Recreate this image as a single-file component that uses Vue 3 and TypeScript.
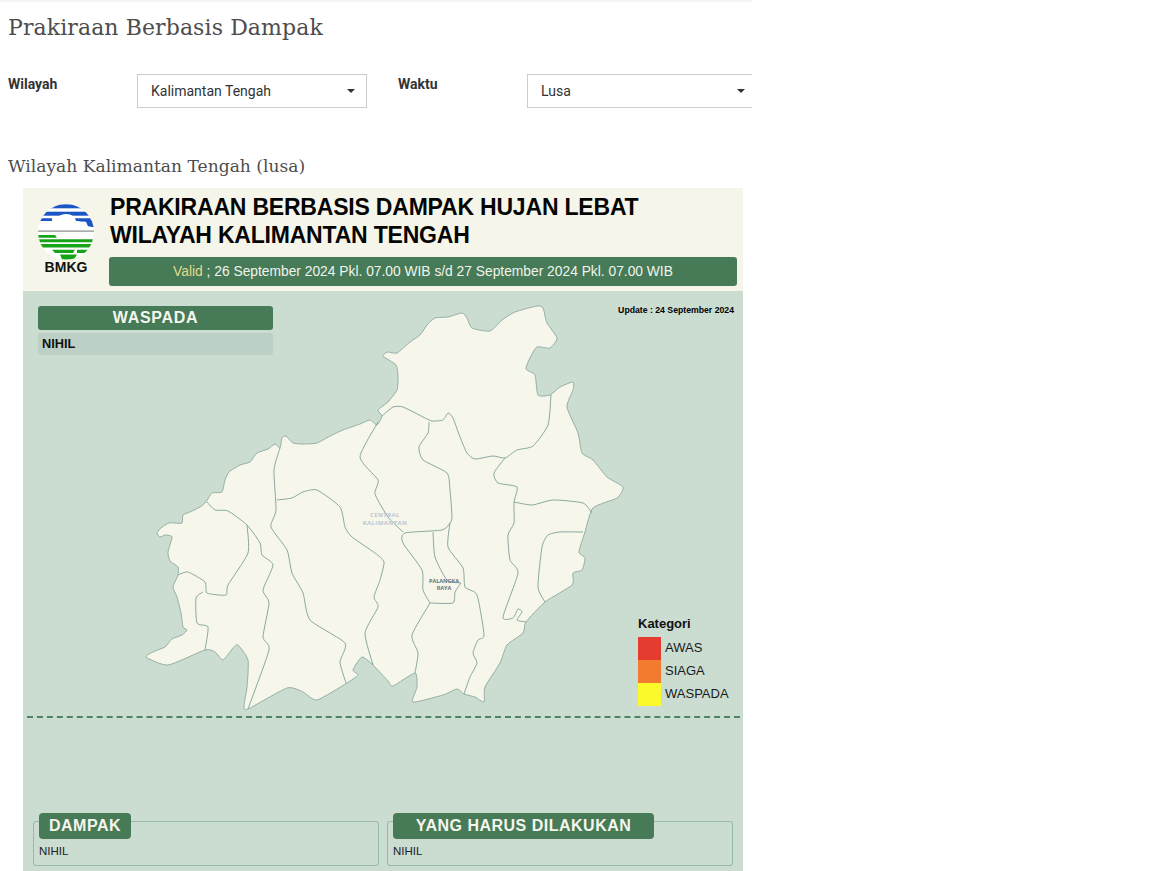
<template>
  <div class="page">
    <h1 class="title">Prakiraan Berbasis Dampak</h1>

    <div class="filters">
      <label class="filter-label">Wilayah</label>
      <div class="select"><span>Kalimantan Tengah</span><i class="caret"></i></div>
      <label class="filter-label">Waktu</label>
      <div class="select"><span>Lusa</span><i class="caret"></i></div>
    </div>

    <h2 class="subtitle">Wilayah Kalimantan Tengah (lusa)</h2>

    <div class="poster">
      <header class="poster-head">
        <div class="logo">
          <svg width="56" height="56" viewBox="0 0 56 56">
            <defs>
              <clipPath id="logo-clip"><circle cx="28" cy="28" r="28" /></clipPath>
            </defs>
            <g clip-path="url(#logo-clip)">
              <rect width="56" height="56" fill="#fff" />
              <rect y="0.300" width="56" height="4" fill="#1c56c4" />
              <rect y="7.700" width="56" height="4" fill="#1c56c4" />
              <path d="M0 14.300h14v2.700H0zM37 14.300h19v9l-6-1-2-4.500-11-.5z" fill="#1c56c4" />
              <path d="M10 27c0-3 1-7 6-8 1-5 6-9 12-9s9 3 10 7c4 0 7 2 8 4 3 0 4 3 3 6z" fill="#fff" />
              <rect y="26.500" width="56" height="1.200" fill="#85898a" />
              <path d="M0 31h17l2 2.700H0z" fill="#17a317" />
              <path d="M0 35.300h56v3H0z" fill="#17a317" />
              <path d="M0 40h56v3.500H0z" fill="#17a317" />
              <path d="M14 45.700h23l-2 3.300H17zM39 45.700h12l-3 3.300h-9z" fill="#17a317" />
              <path d="M22 50.500h17l-3 5H24z" fill="#17a317" />
            </g>
          </svg>
          <span class="logo-name">BMKG</span>
        </div>
        <div class="head-main">
          <div class="head-title">
            <div>PRAKIRAAN BERBASIS DAMPAK HUJAN LEBAT</div>
            <div>WILAYAH KALIMANTAN TENGAH</div>
          </div>
          <div class="valid">
            <span class="valid-word">Valid</span> ; 26 September 2024 Pkl. 07.00 WIB s/d 27 September 2024 Pkl. 07.00 WIB
          </div>
        </div>
      </header>

      <section class="poster-body">
        <div class="map-area">
          <svg class="map" viewBox="23 291 720 426">
            <path :d="outlinePath" class="land" />
            <path v-for="(d, i) in borderPaths" :key="i" :d="d" class="border" />
            <text class="label-prov" x="385" y="517">CENTRAL</text>
            <text class="label-prov" x="385" y="525">KALIMANTAN</text>
            <text class="label-city" x="444" y="583">PALANGKA</text>
            <text class="label-city" x="444" y="590">RAYA</text>
          </svg>

          <div class="map-top">
            <div class="status">
              <div class="status-head">WASPADA</div>
              <div class="status-item">NIHIL</div>
            </div>
            <div class="updated">Update : 24 September 2024</div>
          </div>

          <div class="legend">
            <div class="legend-title">Kategori</div>
            <div v-for="item in legend" :key="item.name" class="legend-row">
              <span class="swatch" :style="{ background: item.color }"></span>
              <span class="legend-name">{{ item.name }}</span>
            </div>
          </div>
        </div>

        <div class="divider"></div>

        <div class="boxes">
          <div class="box">
            <div class="box-tab tab-dampak">DAMPAK</div>
            <div class="box-text">NIHIL</div>
          </div>
          <div class="box">
            <div class="box-tab tab-harus">YANG HARUS DILAKUKAN</div>
            <div class="box-text">NIHIL</div>
          </div>
        </div>
      </section>
    </div>
  </div>
</template>

<script setup lang="ts">
type Pt = [number, number]

const legend = [
  { name: 'AWAS', color: '#e63c30' },
  { name: 'SIAGA', color: '#f27b2f' },
  { name: 'WASPADA', color: '#fbf82b' }
]

// traced from the reference, page coordinates
const outline: Pt[] = [
  [146, 657], [155, 651], [165, 647], [172, 639], [182, 635], [187, 630], [183, 627], [181, 613], [177, 597],
  [173, 587], [178, 575], [178, 567], [170, 561], [168, 552], [172, 537], [165, 535], [160, 537], [157, 533],
  [162, 527], [169, 523], [175, 523], [182, 523], [183, 515], [190, 512], [200, 507], [206, 502], [212, 493],
  [222, 492], [225, 480], [229, 472], [240, 465], [250, 462], [257, 453], [268, 449], [275, 444], [280, 448],
  [282, 438], [286, 436], [293, 443], [303, 444], [317, 443], [332, 435], [343, 430], [360, 424], [370, 420],
  [377, 425], [382, 416], [378, 410], [388, 402], [397, 390], [398, 377], [396, 365], [383, 356], [388, 352],
  [397, 353], [410, 342], [420, 335], [427, 325], [435, 318], [448, 317], [462, 313], [467, 318], [472, 328],
  [490, 331], [502, 320], [515, 312], [537, 306], [543, 308], [547, 323], [557, 338], [550, 348], [537, 347],
  [530, 358], [526, 369], [535, 375], [538, 395], [550, 395], [560, 387], [573, 382], [573, 390], [567, 407],
  [578, 433], [582, 453], [593, 460], [607, 477], [623, 487], [617, 498], [593, 508], [585, 532], [579, 552],
  [585, 558], [582, 570], [573, 573], [572, 585], [545, 602], [526, 622], [523, 633], [507, 645], [500, 663],
  [485, 687], [484, 702], [475, 697], [464, 694], [457, 689], [443, 695], [413, 702], [417, 687], [415, 673],
  [393, 686], [388, 681], [373, 665], [362, 657], [353, 670], [358, 675], [347, 683], [317, 700], [303, 692],
  [287, 688], [248, 709], [244, 706], [247, 687], [248, 660], [238, 645], [233, 648], [223, 660], [215, 652],
  [205, 650], [168, 665]
]

const borders: Pt[][] = [
  [[382, 416], [393, 407], [403, 407], [423, 417], [432, 421], [443, 420], [448, 413], [453, 418], [460, 437],
    [467, 453], [475, 459], [493, 456], [505, 458], [517, 450], [533, 446], [548, 425], [551, 395]],
  [[505, 458], [494, 473], [498, 483], [517, 487], [514, 502], [514, 523], [508, 535], [510, 560], [518, 573],
    [503, 617], [513, 618], [518, 609], [522, 612], [517, 620], [526, 622]],
  [[514, 502], [532, 505], [553, 500], [583, 503], [592, 513]],
  [[583, 532], [560, 532], [548, 535], [542, 547], [538, 587], [545, 602]],
  [[429, 422], [428, 433], [419, 447], [423, 460], [447, 473], [450, 490], [452, 517], [450, 523], [442, 530],
    [405, 533], [403, 543], [422, 570], [423, 590], [430, 603]],
  // Palangka Raya's square edge
  [[430, 603], [453, 603], [455, 592], [461, 583]],
  [[378, 422], [360, 457], [378, 480], [375, 494], [388, 517], [403, 532]],
  [[433, 532], [435, 557], [447, 580], [461, 583]],
  [[450, 523], [448, 547], [463, 568], [465, 587], [477, 595], [484, 635], [478, 640], [473, 653], [477, 663],
    [470, 677], [464, 694]],
  [[430, 603], [412, 635], [418, 653], [415, 673]],
  [[277, 500], [292, 498], [303, 492], [317, 490], [340, 507], [345, 527], [352, 537], [375, 553], [384, 562],
    [380, 580], [374, 597], [378, 607], [365, 633], [373, 665]],
  [[280, 448], [274, 470], [276, 510], [271, 527], [287, 550], [292, 573], [303, 593], [310, 620], [345, 643],
    [340, 662], [346, 683]],
  [[207, 502], [215, 510], [228, 511], [247, 525], [260, 543], [262, 555], [273, 565], [263, 590], [269, 603],
    [263, 637], [269, 650], [248, 709]],
  [[247, 525], [248, 553], [228, 585], [226, 595], [207, 593], [205, 582], [188, 572], [178, 575]],
  [[203, 592], [196, 598], [197, 623], [208, 627], [205, 650]]
]

// catmull-rom through the traced points, low tension keeps the coast a bit jagged
const smooth = (pts: Pt[], closed = false): string => {
  const n = pts.length
  const at = (i: number): Pt => {
    if (closed) return pts[(i + n) % n]!
    return pts[Math.max(0, Math.min(n - 1, i))]!
  }
  let d = `M${pts[0]![0]} ${pts[0]![1]}`
  const last = closed ? n : n - 1
  for (let i = 0; i < last; i++) {
    const [p0, p1, p2, p3] = [at(i - 1), at(i), at(i + 1), at(i + 2)]
    const c1x = p1[0] + (p2[0] - p0[0]) / 10
    const c1y = p1[1] + (p2[1] - p0[1]) / 10
    const c2x = p2[0] - (p3[0] - p1[0]) / 10
    const c2y = p2[1] - (p3[1] - p1[1]) / 10
    d += `C${c1x.toFixed(1)} ${c1y.toFixed(1)} ${c2x.toFixed(1)} ${c2y.toFixed(1)} ${p2[0]} ${p2[1]}`
  }
  return closed ? d + 'Z' : d
}

const outlinePath = smooth(outline, true)
const borderPaths = borders.map((b) => smooth(b))
</script>

<style scoped>
.page {
  width: 752px;
  height: 871px;
  overflow: hidden;
  border-top: 2px solid #f5f5f5;
  box-sizing: border-box;
  font-family: Roboto, "Liberation Sans", sans-serif;
  color: #333;
}

.title {
  margin: 0;
  padding: 12px 0 0 8px;
  font-family: "DejaVu Serif", serif;
  font-weight: 400;
  font-size: 22px;
  line-height: 27px;
  letter-spacing: 0.1px;
  color: #4d4d4d;
}

.filters {
  display: grid;
  grid-template-columns: 129px 230px 160px 230px;
  margin: 33px 0 0 8px;
  height: 34px;
}

.filter-label {
  font-size: 14px;
  font-weight: 700;
  line-height: 20px;
  color: #333;
}

.filter-label:nth-child(3) {
  margin-left: 31px;
}

.select {
  display: flex;
  align-items: center;
  justify-content: space-between;
  box-sizing: border-box;
  height: 34px;
  padding: 0 11px 0 13px;
  border: 1px solid #ccc;
  font-size: 14px;
  color: #333;
}

.caret {
  width: 0;
  height: 0;
  border-left: 4px solid transparent;
  border-right: 4px solid transparent;
  border-top: 4px solid #333;
}

.subtitle {
  margin: 47px 0 0 8px;
  font-family: "DejaVu Serif", serif;
  font-weight: 400;
  font-size: 17.100px;
  line-height: 22px;
  color: #4d4d4d;
}

.poster {
  width: 720px;
  margin: 11px 0 0 23px;
  font-family: "Liberation Sans", Arial, sans-serif;
  color: #000;
}

.poster-head {
  display: flex;
  box-sizing: border-box;
  height: 103px;
  background: #f5f6e9;
  padding: 16px 6px 5px 15px;
}

.logo {
  display: flex;
  flex-direction: column;
  align-items: center;
  width: 56px;
}

.logo svg {
  display: block;
  flex: none;
}

.logo-name {
  margin-top: -1px;
  font-size: 14px;
  font-weight: 700;
  line-height: 16px;
  color: #111;
}

.head-main {
  display: flex;
  flex-direction: column;
  flex: 1;
  margin-left: 15px;
  margin-top: -11px;
}

.head-title {
  padding-left: 1px;
  font-size: 23px;
  font-weight: 700;
  line-height: 28px;
  letter-spacing: -0.2px;
  color: #050505;
}

.valid {
  height: 29px;
  margin-top: auto;
  background: #477a57;
  border-radius: 3px;
  text-align: center;
  font-size: 13.800px;
  line-height: 29px;
  color: #f0f4ec;
}

.valid-word {
  color: #e4d98a;
}

.poster-body {
  height: 580px;
  background: #cbdcd1;
}

.map-area {
  position: relative;
  display: flex;
  flex-direction: column;
  box-sizing: border-box;
  height: 425px;
  padding: 15px 9px 10px 15px;
}

.map {
  position: absolute;
  top: 0;
  left: 0;
  width: 720px;
  height: 426px;
}

.land {
  fill: #f6f7ea;
  stroke: #95afa7;
  stroke-width: 1;
  stroke-linejoin: round;
}

.border {
  fill: none;
  stroke: #7d9e96;
  stroke-width: 0.9;
  stroke-linejoin: round;
}

.label-prov {
  font-family: "Open Sans", sans-serif;
  font-size: 6px;
  font-weight: 700;
  letter-spacing: 0.4px;
  text-anchor: middle;
  fill: #bcc6d6;
}

.label-city {
  font-family: "Open Sans", sans-serif;
  font-size: 5.500px;
  font-weight: 700;
  text-anchor: middle;
  fill: #667180;
}

.map-top {
  position: relative;
  display: flex;
  justify-content: space-between;
  align-items: flex-start;
}

.status {
  width: 235px;
}

.status-head {
  height: 24px;
  background: #477a57;
  border-radius: 3px;
  text-align: center;
  font-size: 16px;
  font-weight: 700;
  line-height: 24px;
  letter-spacing: 0.7px;
  color: #f4f6ee;
}

.status-item {
  height: 22px;
  margin-top: 3px;
  padding-left: 4px;
  background: #bcd0c5;
  border-radius: 3px;
  font-size: 12.800px;
  font-weight: 700;
  line-height: 22px;
  color: #111;
}

.updated {
  margin-top: -1px;
  font-size: 8.700px;
  font-weight: 700;
  line-height: 10px;
  color: #000;
}

.legend {
  position: relative;
  align-self: flex-end;
  width: 96px;
  margin-top: auto;
  font-size: 13px;
  color: #1a1a1a;
}

.legend-title {
  font-weight: 700;
  line-height: 16px;
  margin-bottom: 5px;
  color: #111;
}

.legend-row {
  display: flex;
  align-items: center;
  gap: 4px;
  height: 23px;
}

.legend-name {
  padding-bottom: 2px;
}

.swatch {
  width: 23px;
  height: 23px;
}

.divider {
  height: 0;
  margin: 0 3px 0 4px;
  border-top: 2px dashed #4f8462;
}

.boxes {
  display: grid;
  grid-template-columns: 346px 346px;
  column-gap: 8px;
  padding: 103px 0 0 10px;
}

.box {
  position: relative;
  box-sizing: border-box;
  height: 45px;
  padding: 22px 5px 0;
  border: 1px solid #97b9a7;
  border-radius: 3px;
}

.box-tab {
  position: absolute;
  top: -9px;
  left: 5px;
  height: 26px;
  background: #477a57;
  border-radius: 4px;
  text-align: center;
  font-size: 16px;
  font-weight: 700;
  line-height: 26px;
  letter-spacing: 0.5px;
  color: #f4f6ee;
}

.tab-dampak {
  width: 92px;
}

.tab-harus {
  width: 261px;
}

.box-text {
  font-size: 11.500px;
  line-height: 14px;
  color: #222;
}
</style>

<style>
html,
body {
  margin: 0;
  background: #fff;
}
</style>
